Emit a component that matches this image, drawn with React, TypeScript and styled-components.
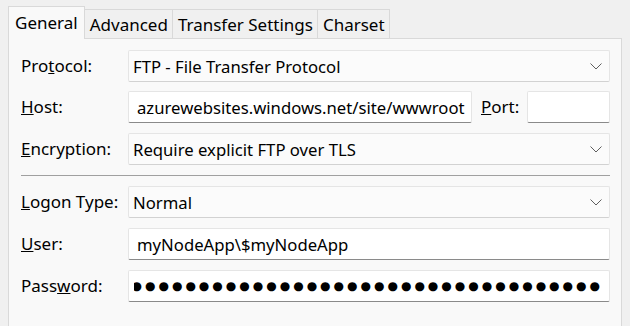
import * as React from "react";
import styled, { createGlobalStyle } from "styled-components";

const GlobalStyle = createGlobalStyle`
  html, body {
    margin: 0;
    padding: 0;
    background: #f0f0f0;
    overflow: hidden;
  }
  body {
    font-family: "Noto Sans", "Open Sans", sans-serif;
    font-size: 17px;
    color: #000;
  }
`;

const Page = styled.div`
  padding: 7px 8px 0 8px;
  width: 614px;
`;

const TabStrip = styled.div`
  display: flex;
  align-items: flex-end;
  height: 32px;
  position: relative;
  z-index: 1;
  margin-bottom: -1px;
`;

const Tab = styled.div<{ $active?: boolean }>`
  box-sizing: border-box;
  height: ${(p) => (p.$active ? "33px" : "30px")};
  padding: ${(p) => (p.$active ? "0 6px 1px 6px" : "0 4px 0 5px")};
  margin-left: ${(p) => (p.$active ? "0" : "-1px")};
  border: 1px solid #d9d9d9;
  border-bottom: ${(p) => (p.$active ? "none" : "1px solid #d9d9d9")};
  background: ${(p) => (p.$active ? "#f9f9f9" : "#f0f0f0")};
  display: flex;
  align-items: center;
  line-height: 1;
  white-space: nowrap;
`;

const Pane = styled.div`
  box-sizing: border-box;
  width: 614px;
  height: 320px;
  border: 1px solid #d9d9d9;
  background: #f9f9f9;
  padding: 11px 11px 0 12px;
`;

const Form = styled.div`
  display: grid;
  grid-template-columns: 107px minmax(0, 1fr);
  row-gap: 10px;
  align-items: center;
`;

const Label = styled.div<{ $tight?: boolean }>`
  line-height: 20px;
  white-space: nowrap;
  margin-bottom: ${(p) => (p.$tight ? "-1px" : "0")};
`;

const Separator = styled.div`
  grid-column: 1 / 3;
  height: 1px;
  background: #a0a0a0;
`;

const Select = styled.div<{ $tight?: boolean }>`
  box-sizing: border-box;
  height: 32px;
  margin-bottom: ${(p) => (p.$tight ? "-1px" : "0")};
  border: 1px solid #e5e5e5;
  border-bottom-color: #d2d2d2;
  border-radius: 2px;
  background: #fbfbfb;
  display: flex;
  align-items: center;
  justify-content: space-between;
  padding: 0 7px 0 4px;
  font-size: 16.7px;
  white-space: nowrap;
  min-width: 0;
`;

const Input = styled.div<{ $width?: number }>`
  box-sizing: border-box;
  height: 32px;
  width: ${(p) => (p.$width ? `${p.$width}px` : "auto")};
  flex: none;
  min-width: 0;
  border: 1px solid #e5e5e5;
  border-bottom-color: #8a8a8a;
  border-radius: 2px;
  background: #fff;
  display: flex;
  align-items: center;
  padding: 0 7px 0 8px;
  font-size: 16.7px;
  white-space: nowrap;
  overflow: hidden;
`;

const HostRow = styled.div`
  display: flex;
  align-items: center;
  min-width: 0;
`;

const PortLabel = styled(Label)`
  margin: 0 0 0 9px;
  flex: 1;
`;

const Dots = styled.div`
  flex: 1;
  overflow: hidden;
  direction: rtl;
  white-space: nowrap;
  font-family: "DejaVu Sans", sans-serif;
  font-size: 12px;
  letter-spacing: 3px;
  margin-right: -1px;
  margin-left: -3px;
`;

const Chevron = () => (
  <svg width="12" height="7" viewBox="0 0 12 7">
    <polyline points="0.5,0.5 6,6 11.5,0.5" fill="none" stroke="#5f5f5f" strokeWidth="1" />
  </svg>
);

export default function App() {
  return (
    <Page>
      <GlobalStyle />
      <TabStrip>
        <Tab $active>General</Tab>
        <Tab>Advanced</Tab>
        <Tab>Transfer Settings</Tab>
        <Tab>Charset</Tab>
      </TabStrip>
      <Pane>
        <Form>
          <Label $tight>
            Pro<u>t</u>ocol:
          </Label>
          <Select $tight>
            FTP - File Transfer Protocol
            <Chevron />
          </Select>

          <Label>
            <u>H</u>ost:
          </Label>
          <HostRow>
            <Input $width={344}>azurewebsites.windows.net/site/wwwroot</Input>
            <PortLabel>
              <u>P</u>ort:
            </PortLabel>
            <Input $width={83} />
          </HostRow>

          <Label>
            <u>E</u>ncryption:
          </Label>
          <Select>
            Require explicit FTP over TLS
            <Chevron />
          </Select>

          <Separator />

          <Label>
            <u>L</u>ogon Type:
          </Label>
          <Select>
            Normal
            <Chevron />
          </Select>

          <Label>
            <u>U</u>ser:
          </Label>
          <Input>myNodeApp\$myNodeApp</Input>

          <Label>
            Pass<u>w</u>ord:
          </Label>
          <Input>
            <Dots>{"●".repeat(60)}</Dots>
          </Input>
        </Form>
      </Pane>
    </Page>
  );
}
